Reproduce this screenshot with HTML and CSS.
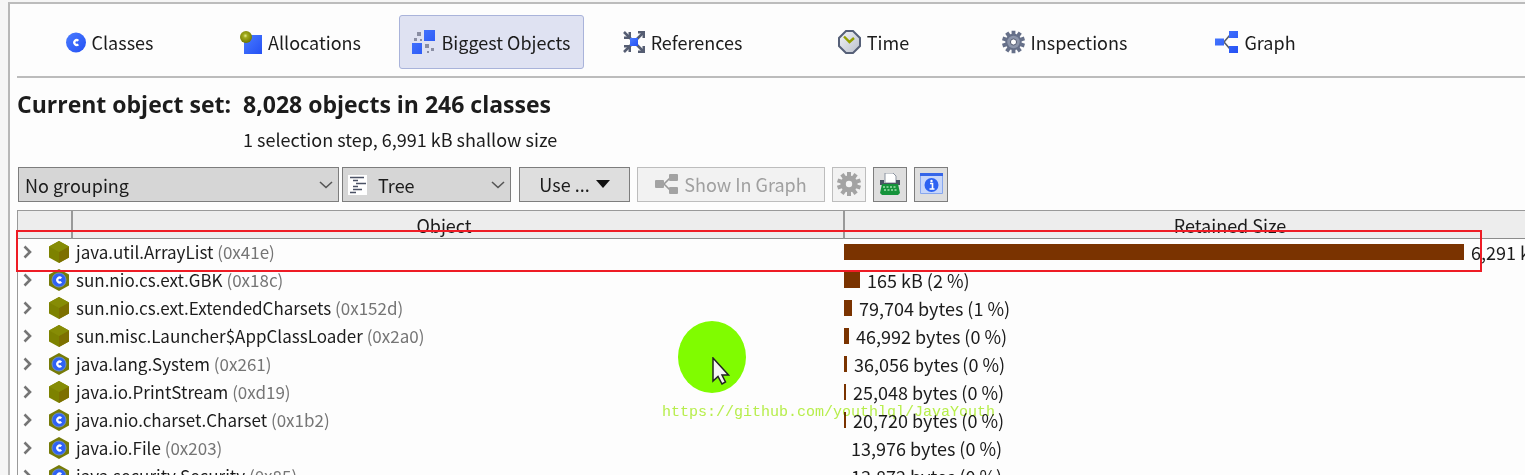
FILE: index.html
```html
<!DOCTYPE html>
<html lang="en">
<head>
<meta charset="utf-8">
<title>Heap Walker - Biggest Objects</title>
<link rel="stylesheet" href="styles.css">
</head>
<body>
<svg class="defs" aria-hidden="true">
  <defs>
    <linearGradient id="blue" x1="0" y1="0" x2="1" y2="1"><stop offset="0" stop-color="#4a7cff"/><stop offset="1" stop-color="#2450f4"/></linearGradient>
    <linearGradient id="face" x1="0" y1="0" x2="1" y2="1"><stop offset="0" stop-color="#f4f5f8"/><stop offset="1" stop-color="#b9bfcb"/></linearGradient>
    <radialGradient id="olive" cx=".45" cy=".4" r=".6"><stop offset="0" stop-color="#e4ee90"/><stop offset=".3" stop-color="#a0aa1c"/><stop offset="1" stop-color="#717800"/></radialGradient>
    <symbol id="cube" viewBox="0 0 20 22">
      <path d="M10 0 20 5.500V16.500L10 22 0 16.500V5.500z" fill="#7d8200"/>
      <path d="M10 11 20 5.500V16.500L10 22z" fill="#7d7000"/>
      <path d="M10 0 20 5.500 10 11 0 5.500z" fill="#868c05"/>
    </symbol>
    <symbol id="cube-class" viewBox="0 0 20 22">
      <path d="M10 0 20 5.500V16.500L10 22 0 16.500V5.500z" fill="#767b08"/>
      <circle cx="10" cy="11" r="7" fill="#2f62f5" stroke="#6d8fc0"/>
      <path d="M12.300 9.200A2.400 2.400 0 1 0 12.300 12.800" fill="none" stroke="#fff" stroke-width="2.200"/>
    </symbol>
    <symbol id="gear" viewBox="0 0 24 24">
      <g fill="currentColor">
        <circle cx="12" cy="12" r="8.500"/>
        <path d="M10 0h4v24h-4z"/><path d="M10 0h4v24h-4z" transform="rotate(36 12 12)"/><path d="M10 0h4v24h-4z" transform="rotate(72 12 12)"/><path d="M10 0h4v24h-4z" transform="rotate(108 12 12)"/><path d="M10 0h4v24h-4z" transform="rotate(144 12 12)"/>
      </g>
    </symbol>
    <symbol id="graph" viewBox="0 0 23 22">
      <path d="M9 11 15 4M9 11 15 18" stroke="#555c6c" stroke-width="1.600"/>
      <path d="M0 7.500h9v7H0zM14 0h9v7h-9zM14 15h9v7h-9z" fill="url(#blue)"/>
    </symbol>
    <symbol id="chevron" viewBox="0 0 9 14"><path d="M1.500 1.500 7 7 1.500 12.500" fill="none" stroke="#757575" stroke-width="2.600"/></symbol>
  </defs>
</svg>

<main class="panel">
  <nav class="tabs">
    <button class="tab"><svg width="20" height="21" viewBox="0 0 20 21"><circle cx="10" cy="10.500" r="10" fill="url(#blue)"/><path d="M12.300 8.700A2.400 2.400 0 1 0 12.300 12.300" fill="none" stroke="#fff" stroke-width="2.200"/></svg>Classes</button>
    <button class="tab"><svg width="22" height="23" viewBox="0 0 22 23"><path d="M4 4h18v19H4z" fill="url(#blue)"/><circle cx="6" cy="6" r="6" fill="url(#olive)"/></svg>Allocations</button>
    <button class="tab tab-active"><svg width="23" height="24" viewBox="0 0 23 24"><path d="M12 0h11v11H12zM0 13h10v11H0z" fill="url(#blue)"/><path d="M5 2h4v4H5zM2 8h3v3H2zM8 9h2v2H8zM13 14h4v4h-4zM19 18h3v3h-3zM15 21h2v2h-2z" fill="#8a8ea3"/></svg>Biggest Objects</button>
    <button class="tab"><svg width="22" height="22" viewBox="0 0 22 22"><path d="M1 1 8 8M21 1 14 8M1 21 8 14M21 21 14 14" stroke="#555d72" stroke-width="2.600"/><path d="M8 1V8H1V5.500H5.500V1zM15 0H22V7H19.500V2.500H15zM8 21V14H1V16.500H5.500V21zM15 22H22V15H19.500V19.500H15z" fill="#555d72"/><path d="M7 7h8v8H7z" fill="url(#blue)"/></svg>References</button>
    <button class="tab"><svg width="23" height="24" viewBox="0 0 23 24"><path d="M8 1h7l7 7v8l-7 7H8l-7-7V8z" fill="url(#face)" stroke="#566078" stroke-width="2"/><path d="M6 6.500 11.500 12 16 8" fill="none" stroke="#94a000" stroke-width="2.400"/></svg>Time</button>
    <button class="tab"><svg class="gear-steel" width="23" height="24" viewBox="0 0 24 24"><use href="#gear"/><circle cx="12" cy="12" r="6.500" fill="#8c95aa"/><circle cx="12" cy="12" r="3.200" fill="#fff" stroke="#4f586e"/></svg>Inspections</button>
    <button class="tab"><svg width="23" height="22"><use href="#graph"/></svg>Graph</button>
  </nav>

  <header class="summary">
    <h1 class="summary-title">Current object set:</h1>
    <h1 class="summary-title">8,028 objects in 246 classes</h1>
    <p class="summary-detail">1 selection step, 6,991 kB shallow size</p>
  </header>

  <div class="toolbar">
    <div class="selects">
      <div class="picker picker-wide">
        <select class="picker-select" aria-label="Grouping"><option>No grouping</option></select>
        <svg class="picker-arrow" width="14" height="8" viewBox="0 0 14 8"><path d="M1 1 7 6.500 13 1" fill="none" stroke="#555" stroke-width="1.600"/></svg>
      </div>
      <div class="picker picker-icon">
        <svg class="picker-glyph" width="19" height="20" viewBox="0 0 19 20"><path d="M0 0h19v20H0z" fill="#fff"/><path d="M2 2.500h14M5 5.500h5M8 8.500h10M5 11.500h5M5 14.500h9M2 17.500h6" stroke="#4b5265" stroke-width="1.400"/></svg>
        <select class="picker-select" aria-label="View"><option>Tree</option></select>
        <svg class="picker-arrow" width="14" height="8" viewBox="0 0 14 8"><path d="M1 1 7 6.500 13 1" fill="none" stroke="#555" stroke-width="1.600"/></svg>
      </div>
    </div>
    <button class="tool tool-use">Use ...<svg width="14" height="8" viewBox="0 0 14 8"><path d="M0 0h14L7 8z" fill="#111"/></svg></button>
    <button class="tool tool-graph" disabled><svg width="23" height="20" viewBox="0 0 23 20"><path d="M9 10 15 4M9 10 15 16" stroke="#999" stroke-width="1.600"/><rect y="6" width="9" height="8" rx="1" fill="#a3a3a3"/><rect x="14" width="9" height="7" rx="1" fill="#a3a3a3"/><rect x="14" y="13" width="9" height="7" rx="1" fill="#a3a3a3"/></svg>Show In Graph</button>
    <button class="tool tool-square" disabled aria-label="Settings"><svg class="gear-grey" width="24" height="24" viewBox="0 0 24 24"><use href="#gear"/><circle cx="12" cy="12" r="3.200" fill="#f4f4f4"/></svg></button>
    <button class="tool tool-square" aria-label="Export"><svg width="22" height="22" viewBox="0 0 22 22"><path d="M6 9V0h8l3 3v7H6z" fill="#fff" stroke="#8b93a0"/><path d="M1 7h4v3h12V7h4v5H1z" fill="#4a5564"/><path d="M3 11h16l2 9-2 2H3l-2-2z" fill="#15933a"/><path d="M4 14h14M5 17h13" stroke="#9fe0ad" stroke-width="1.600" stroke-dasharray="2 1.500"/></svg></button>
    <button class="tool tool-square" aria-label="Information"><svg width="23" height="21" viewBox="0 0 23 21"><path d="M.5.5h22v20H.5z" fill="#c7d6fa" stroke="#86a6ee"/><path d="M0 0h23v3H0z" fill="#3565e8"/><circle cx="11.500" cy="12" r="7" fill="#2d62f2"/><path d="M10 10.500h2.500V16M9.500 16h5" fill="none" stroke="#fff" stroke-width="1.600"/><circle cx="11.500" cy="8" r="1.200" fill="#fff"/></svg></button>
  </div>

  <div class="grid-wrap">
    <table class="grid">
      <thead><tr><th class="col-icon" aria-label="Expand"></th><th class="col-object">Object</th><th class="col-size">Retained Size</th></tr></thead>
      <tbody>
        <tr><td><div class="lead"><svg width="9" height="14"><use href="#chevron"/></svg><svg width="20" height="22"><use href="#cube"/></svg></div></td><td class="name">java.util.ArrayList <span class="id">(0x41e)</span></td><td><div class="size"><i class="bar" style="width:620px"></i>6,291 kB (89 %)</div></td></tr>
        <tr><td><div class="lead"><svg width="9" height="14"><use href="#chevron"/></svg><svg width="20" height="22"><use href="#cube-class"/></svg></div></td><td class="name">sun.nio.cs.ext.GBK <span class="id">(0x18c)</span></td><td><div class="size"><i class="bar" style="width:16px"></i>165 kB (2 %)</div></td></tr>
        <tr><td><div class="lead"><svg width="9" height="14"><use href="#chevron"/></svg><svg width="20" height="22"><use href="#cube"/></svg></div></td><td class="name">sun.nio.cs.ext.ExtendedCharsets <span class="id">(0x152d)</span></td><td><div class="size"><i class="bar" style="width:8px"></i>79,704 bytes (1 %)</div></td></tr>
        <tr><td><div class="lead"><svg width="9" height="14"><use href="#chevron"/></svg><svg width="20" height="22"><use href="#cube"/></svg></div></td><td class="name">sun.misc.Launcher$AppClassLoader <span class="id">(0x2a0)</span></td><td><div class="size"><i class="bar" style="width:5px"></i>46,992 bytes (0 %)</div></td></tr>
        <tr><td><div class="lead"><svg width="9" height="14"><use href="#chevron"/></svg><svg width="20" height="22"><use href="#cube-class"/></svg></div></td><td class="name">java.lang.System <span class="id">(0x261)</span></td><td><div class="size"><i class="bar" style="width:3px"></i>36,056 bytes (0 %)</div></td></tr>
        <tr><td><div class="lead"><svg width="9" height="14"><use href="#chevron"/></svg><svg width="20" height="22"><use href="#cube"/></svg></div></td><td class="name">java.io.PrintStream <span class="id">(0xd19)</span></td><td><div class="size"><i class="bar" style="width:2px"></i>25,048 bytes (0 %)</div></td></tr>
        <tr><td><div class="lead"><svg width="9" height="14"><use href="#chevron"/></svg><svg width="20" height="22"><use href="#cube-class"/></svg></div></td><td class="name">java.nio.charset.Charset <span class="id">(0x1b2)</span></td><td><div class="size"><i class="bar" style="width:2px"></i>20,720 bytes (0 %)</div></td></tr>
        <tr><td><div class="lead"><svg width="9" height="14"><use href="#chevron"/></svg><svg width="20" height="22"><use href="#cube-class"/></svg></div></td><td class="name">java.io.File <span class="id">(0x203)</span></td><td><div class="size"><i class="bar" style="width:0px"></i>13,976 bytes (0 %)</div></td></tr>
        <tr><td><div class="lead"><svg width="9" height="14"><use href="#chevron"/></svg><svg width="20" height="22"><use href="#cube-class"/></svg></div></td><td class="name">java.security.Security <span class="id">(0x85)</span></td><td><div class="size"><i class="bar" style="width:0px"></i>13,872 bytes (0 %)</div></td></tr>
      </tbody>
    </table>
  </div>
</main>

<div class="marker"></div>
<div class="spot"></div>
<svg class="cursor" width="18" height="28" viewBox="0 0 18 28"><path d="M1 1V24L6 19.500 10 27 13.500 25 10 18H16.500z" fill="#f4f4f4" stroke="#222" stroke-width="1.500"/></svg>
<div class="watermark">https://github.com/youthlql/JavaYouth</div>
</body>
</html>
```
FILE: styles.css
```css
* { box-sizing: border-box; }

body {
  margin: 0;
  height: 100vh;
  overflow: hidden;
  position: relative;
  display: flex;
  flex-direction: column;
  padding: 2px 0 0 8px;
  background: #f6f6f6;
  color: #1c1c1c;
  font: 18px/26px "Noto Sans CJK SC", "Open Sans", sans-serif;
}

.defs { position: absolute; width: 0; height: 0; }

button, select { font: inherit; color: inherit; }

svg { flex: none; }

.panel {
  flex: 1;
  min-height: 0;
  display: flex;
  flex-direction: column;
  padding-left: 7px;
  background: #fdfdfd;
  border-top: 2px solid #bcbcbc;
  border-left: 2px solid #b8b8b8;
}

.tabs {
  display: flex;
  gap: 6px;
  padding: 11px 0 7px;
  border-bottom: 2px solid #bcbcbc;
}

.tab {
  width: 185px;
  height: 54px;
  display: flex;
  align-items: center;
  justify-content: center;
  gap: 6px;
  padding: 0;
  background: none;
  border: 1px solid transparent;
  border-radius: 3px;
  white-space: nowrap;
}

.tab-active {
  background: #dfe2f2;
  border-color: #a9b3da;
}

.gear-steel { color: #667089; }
.gear-grey { color: #a3a3a3; }

.summary {
  display: grid;
  grid-template-columns: max-content 1fr;
  column-gap: 12px;
  padding-top: 8px;
}

.summary-title {
  margin: 0;
  font-family: "Open Sans", sans-serif;
  font-size: 23px;
  line-height: 36px;
  font-weight: bold;
}

.summary-detail {
  grid-column: 2;
  margin: 0;
  line-height: 34px;
}

.toolbar {
  display: flex;
  gap: 7px;
  padding: 11px 0 8px 1px;
}

.selects { display: flex; gap: 3px; padding-right: 1px; }

.picker { position: relative; }
.picker-wide { width: 321px; }
.picker-icon { width: 169px; }

.picker-select {
  width: 100%;
  height: 35px;
  padding: 0 30px 0 6px;
  appearance: none;
  background: #d6d6d6;
  border: 1px solid #7d7d7d;
  border-radius: 0;
}

.picker-icon .picker-select { padding-left: 35px; }
.picker-arrow { position: absolute; right: 6px; top: 14px; pointer-events: none; }
.picker-glyph { position: absolute; left: 6px; top: 8px; pointer-events: none; }

.tool {
  height: 35px;
  display: flex;
  align-items: center;
  justify-content: center;
  gap: 6px;
  padding: 0 0 2px;
  background: #dedede;
  border: 1px solid #7d7d7d;
  white-space: nowrap;
}

.tool:disabled {
  background: #f2f2f2;
  border-color: #bdbdbd;
  color: #a0a0a0;
}

.tool-use { width: 111px; }
.tool-graph { width: 188px; }
.tool-square { width: 34px; }

.grid-wrap {
  flex: 1;
  min-height: 0;
  overflow: hidden;
  border-top: 1px solid #999;
  border-left: 1px solid #999;
}

.grid {
  width: calc(100% + 90px);
  table-layout: fixed;
  border-collapse: separate;
  border-spacing: 0;
}

.grid th {
  height: 28px;
  padding: 0;
  font-weight: normal;
  background: #ededed;
  border-bottom: 1px solid #8c8c8c;
}

.grid th + th { border-left: 2px solid #999; }
.grid .col-icon { width: 53px; }
.grid .col-object { width: 772px; padding-right: 28px; }

.grid td {
  height: 28px;
  padding: 0 0 2px;
  white-space: nowrap;
}

.grid .name { padding-left: 5px; font-size: 17px; }
.id { color: #757575; }

.lead {
  display: flex;
  align-items: center;
  gap: 17px;
  padding-left: 5px;
}

.size {
  display: flex;
  align-items: center;
  gap: 7px;
  padding-left: 1px;
}

.bar {
  flex: none;
  height: 16px;
  background: #7a3300;
}

.marker {
  position: absolute;
  left: 16px;
  right: 43px;
  top: 230px;
  height: 42px;
  border: 2px solid #ee1c25;
}

.spot {
  position: absolute;
  left: 678px;
  top: 321px;
  width: 68px;
  height: 72px;
  border-radius: 50%;
  background: #80fc00;
}

.cursor { position: absolute; left: 712px; top: 357px; }

.watermark {
  position: absolute;
  left: 662px;
  top: 400px;
  color: #b9f04c;
  font-family: "Liberation Mono", monospace;
  font-size: 15px;
  mix-blend-mode: multiply;
}
```
